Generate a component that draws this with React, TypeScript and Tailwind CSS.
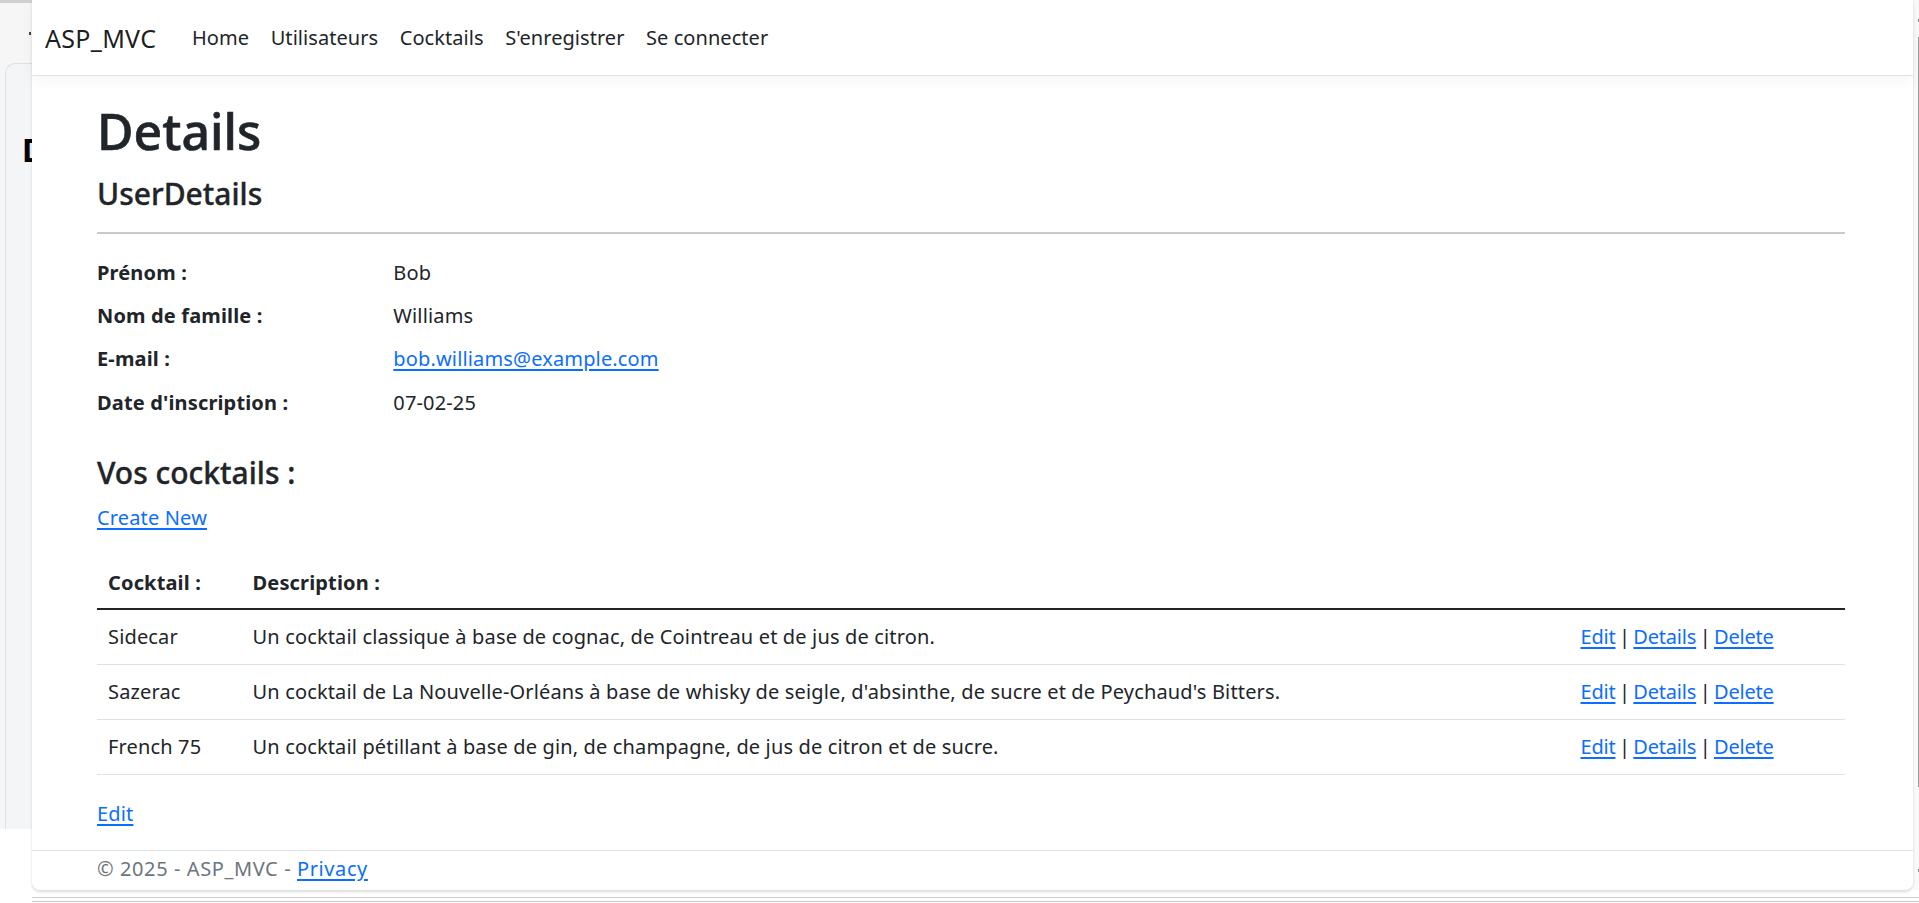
import React from "react";

const rows = [
  {
    name: "Sidecar",
    desc: "Un cocktail classique à base de cognac, de Cointreau et de jus de citron.",
  },
  {
    name: "Sazerac",
    desc: "Un cocktail de La Nouvelle-Orléans à base de whisky de seigle, d'absinthe, de sucre et de Peychaud's Bitters.",
  },
  {
    name: "French 75",
    desc: "Un cocktail pétillant à base de gin, de champagne, de jus de citron et de sucre.",
  },
];

const details = [
  { label: "Prénom :", value: "Bob" },
  { label: "Nom de famille :", value: "Williams" },
  { label: "E-mail :", value: "bob.williams@example.com", link: true },
  { label: "Date d'inscription :", value: "07-02-25" },
];

function A({ children }: { children: React.ReactNode }) {
  return (
    <a href="#" className="text-[#0d6efd] underline decoration-[1.5px] underline-offset-[3px]">
      {children}
    </a>
  );
}

export default function App() {
  return (
    <div className="w-[1919px] h-[903px] overflow-hidden bg-white flex flex-col font-['Noto_Sans',sans-serif] text-[#212529] tracking-[0.15px]">
      <div className="flex h-[890px] shrink-0">
        {/* window behind, left edge */}
        <div className="w-[32px] h-[829px] shrink-0 bg-[#f6f6f6] flex flex-col overflow-hidden">
          <div className="h-[3px] bg-[#cfcfcf]" />
          <div className="h-[60px] pt-[29px] pl-[29px]">
            <div className="w-[2px] h-[3px] bg-[#444]" />
          </div>
          <div className="flex-1 ml-[5px] border-l border-t border-[#e1e1e3] rounded-tl-[10px] bg-[#f4f5f7] pt-[70px] pl-[16px]">
            <span className="block text-[32px] font-bold leading-none text-black whitespace-nowrap">D</span>
          </div>
        </div>

        {/* main browser page */}
        <div className="w-[1881px] shrink-0 bg-white rounded-b-[8px] shadow-[0_2px_3px_rgba(0,0,0,0.14)] flex flex-col relative z-10">
          {/* navbar */}
          <nav className="h-[76px] shrink-0 border-b border-[#e2e3e5] shadow-[0_5px_14px_rgba(0,0,0,0.04)] flex items-center pl-[13px] pt-[1px]">
            <span className="w-[147px] shrink-0 text-[25px] leading-[34px] text-black/90 whitespace-nowrap tracking-[0.3px]">ASP_MVC</span>
            <div className="flex items-center gap-[21.6px] text-[20px] leading-[30px] text-[#212529] tracking-[0.05px]">
              <a href="#">Home</a>
              <a href="#">Utilisateurs</a>
              <a href="#">Cocktails</a>
              <a href="#">S'enregistrer</a>
              <a href="#">Se connecter</a>
            </div>
          </nav>

          {/* main content */}
          <main className="pl-[65px] w-[1813px] flex flex-col">
            <h1 className="mt-[23px] h-[64px] text-[50px] leading-[64px] font-medium tracking-normal [-webkit-text-stroke:0.6px_#212529]">Details</h1>
            <h4 className="mt-[11px] h-[40px] text-[30px] leading-[40px] font-medium tracking-normal [-webkit-text-stroke:0.35px_#212529]">UserDetails</h4>
            <div className="mt-[17.5px] h-[2px] bg-[#c9c9ca]" />
            <dl className="mt-[18px] flex flex-col text-[20px]">
              {details.map((d) => (
                <div key={d.label} className="h-[43.2px] flex items-center">
                  <dt className="w-[296.3px] shrink-0 font-bold leading-[30px]">{d.label}</dt>
                  <dd className="leading-[30px]">{d.link ? <A>{d.value}</A> : d.value}</dd>
                </div>
              ))}
            </dl>
            <h4 className="mt-[29.1px] h-[40px] text-[30px] leading-[40px] font-medium tracking-normal [-webkit-text-stroke:0.35px_#212529]">Vos cocktails :</h4>
            <div className="mt-[9.4px] h-[30px] text-[20px] leading-[30px]">
              <A>Create New</A>
            </div>

            {/* table */}
            <div className="mt-[24.6px] w-[1748px] text-[20px]">
              <div className="grid grid-cols-[144.5px_1328px_275.5px] h-[52.6px] border-b-2 border-[#212529] items-center font-bold leading-[30px]">
                <div className="pl-[11px]">Cocktail :</div>
                <div className="pl-[11px]">Description :</div>
                <div />
              </div>
              {rows.map((r) => (
                <div
                  key={r.name}
                  className="grid grid-cols-[144.5px_1328px_275.5px] h-[55px] border-b border-[#dee2e6] items-center leading-[30px] pt-[1px]"
                >
                  <div className="pl-[11px]">{r.name}</div>
                  <div className="pl-[11px] whitespace-nowrap">{r.desc}</div>
                  <div className="pl-[11px] whitespace-nowrap tracking-[-0.2px] [word-spacing:-1.5px]">
                    <A>Edit</A> | <A>Details</A> | <A>Delete</A>
                  </div>
                </div>
              ))}
            </div>

            <div className="mt-[24px] h-[30px] text-[20px] leading-[30px]">
              <A>Edit</A>
            </div>
          </main>

          {/* footer */}
          <footer className="mt-auto h-[40.5px] border-t border-[#dee2e6] pl-[65px] pt-[3px] text-[20px] leading-[30px] text-[#6c757d] tracking-[0.6px]">
            © 2025 - ASP_MVC - <A>Privacy</A>
          </footer>
        </div>

        {/* right edge / scrollbar */}
        <div className="w-[6px] shrink-0 bg-[#f9f9f9] flex flex-col">
          <div className="h-[19px]" />
          <div className="ml-[5px] w-[1px] h-[3px] bg-[#8a8a8a]" />
          <div className="h-[15px]" />
          <div className="ml-[5px] w-[1px] h-[750px] bg-[#9a9a9a]" />
          <div className="h-[82px]" />
          <div className="ml-[5px] w-[1px] h-[3px] bg-[#8a8a8a]" />
        </div>
      </div>

      {/* bottom edge */}
      <div className="flex-1 flex">
        <div className="w-[32px] shrink-0" />
        <div className="flex-1 flex flex-col">
          <div className="h-[7px]" />
          <div className="h-[1px] bg-[#d6cdcd]" />
          <div className="h-[3px]" />
          <div className="h-[1px] bg-[#cdc4c4]" />
        </div>
      </div>
    </div>
  );
}
